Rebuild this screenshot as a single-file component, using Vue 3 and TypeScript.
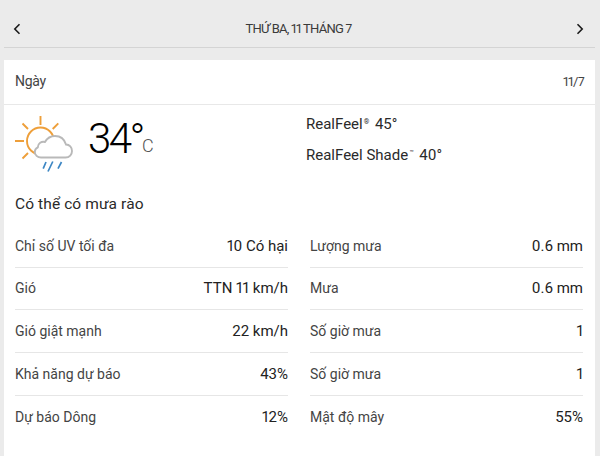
<script setup lang="ts">
interface Stat {
  label: string
  value: string
}

const stats: Stat[] = [
  { label: 'Chỉ số UV tối đa', value: '10 Có hại' },
  { label: 'Lượng mưa', value: '0.6 mm' },
  { label: 'Gió', value: 'TTN 11 km/h' },
  { label: 'Mưa', value: '0.6 mm' },
  { label: 'Gió giật mạnh', value: '22 km/h' },
  { label: 'Số giờ mưa', value: '1' },
  { label: 'Khả năng dự báo', value: '43%' },
  { label: 'Số giờ mưa', value: '1' },
  { label: 'Dự báo Dông', value: '12%' },
  { label: 'Mật độ mây', value: '55%' }
]
</script>

<template>
  <div class="page">
    <header class="nav">
      <svg class="chev" width="8" height="12" viewBox="0 0 8 12">
        <path d="M6.500 1.200 1.800 6l4.700 4.800" />
      </svg>
      <span class="nav-title">THỨ BA, 11 THÁNG 7</span>
      <svg class="chev" width="8" height="12" viewBox="0 0 8 12">
        <path d="M1.500 1.200 6.200 6l-4.700 4.800" />
      </svg>
    </header>

    <main class="card">
      <div class="card-head">
        <span class="day">Ngày</span>
        <span class="date">11/7</span>
      </div>

      <div class="current">
        <div class="now">
          <svg class="weather-icon" width="60" height="60" viewBox="14 115 60 60">
            <g class="sun">
              <circle cx="40.500" cy="141" r="13.500" />
              <path d="M15 141h9M40.500 116v9M22.500 123.500 28 129M58.300 123.300 52.700 129M22.500 158.500 28 153" />
            </g>
            <path
              class="cloud"
              d="M41 157.500H65.500C69.500 157.500 72 154.500 72 151C72 147.500 69.500 144.500 66 144.500C64.500 139.500 60.500 136 55 136C50.500 136 47 138.500 45 142C41.500 141 38 143.500 37.800 147.300C35.500 148.500 34.800 150.500 34.800 152C34.800 155 37.500 157.500 41 157.500Z"
            />
            <path class="rain" d="M46 162l-2.800 6.700M52.800 161.500l-4.800 10M61.500 162l-3.500 6.700" />
          </svg>
          <span class="temp">34°</span>
          <span class="unit">C</span>
        </div>
        <div class="feels">
          <div>RealFeel<sup>®</sup> 45°</div>
          <div>RealFeel Shade<sup>™</sup> 40°</div>
        </div>
      </div>

      <p class="phrase">Có thể có mưa rào</p>

      <div class="stats">
        <div v-for="(s, i) in stats" :key="i" class="stat">
          <span class="stat-label">{{ s.label }}</span>
          <span class="stat-value">{{ s.value }}</span>
        </div>
      </div>
    </main>
  </div>
</template>

<style>
html,
body {
  margin: 0;
  background: #ebebeb;
}
</style>

<style scoped>
.page {
  width: 600px;
  height: 456px;
  overflow: hidden;
  box-sizing: border-box;
  padding: 0 5px 0 4px;
  background: #ebebeb;
  font-family: Roboto, "Liberation Sans", sans-serif;
  font-variant-numeric: proportional-nums;
  color: #1f1f1f;
}

.nav {
  height: 48px;
  box-sizing: border-box;
  display: flex;
  align-items: center;
  justify-content: space-between;
  padding: 10px 11px 0 9px;
  border-bottom: 1px solid #d4d4d4;
}

.nav-title {
  font-size: 13px;
  letter-spacing: -0.75px;
  color: #3a3a3a;
}

.chev path {
  fill: none;
  stroke: #1a1a1a;
  stroke-width: 1.6;
}

.card {
  margin-top: 12px;
  height: 396px;
  background: #fff;
  padding: 0 12px 0 11px;
  box-sizing: border-box;
}

.card-head {
  height: 45px;
  margin: 0 -12px 0 -11px;
  padding: 0 11px 2px 11px;
  box-sizing: border-box;
  display: flex;
  align-items: center;
  justify-content: space-between;
  border-bottom: 1px solid #e8e8e8;
  font-size: 14px;
}

.day {
  color: #444;
  letter-spacing: -0.3px;
}

.date {
  font-size: 13px;
  letter-spacing: -0.6px;
  color: #444;
}

.current {
  display: grid;
  grid-template-columns: 273px 273px;
  column-gap: 22px;
  height: 72px;
}

.now {
  display: flex;
  align-items: flex-start;
}

.weather-icon {
  margin-top: 10px;
  margin-left: -1px;
}

.sun circle,
.sun path {
  fill: none;
  stroke: #ee9f3a;
  stroke-width: 1.9;
}

.cloud {
  fill: #fff;
  stroke: #b9b9b9;
  stroke-width: 1.9;
}

.rain {
  fill: none;
  stroke: #3d87c4;
  stroke-width: 1.7;
}

.temp {
  margin-left: 14px;
  margin-top: 6px;
  font-size: 42px;
  font-weight: 300;
  letter-spacing: -2.500px;
  line-height: 56px;
  color: #000;
}

.unit {
  margin-left: -1px;
  margin-top: 29px;
  font-size: 18px;
  font-weight: 300;
  line-height: 24px;
  color: #555;
}

.feels {
  margin-left: -4px;
  padding-top: 4px;
  font-size: 15px;
  line-height: 31px;
  color: #2a2a2a;
}

.feels sup {
  font-size: 7px;
  line-height: 0;
  vertical-align: 5px;
  margin: 0 2px 0 1px;
}

.phrase {
  margin: 0;
  height: 48px;
  padding-top: 16px;
  box-sizing: border-box;
  font-size: 15.5px;
  letter-spacing: 0.1px;
  line-height: 22px;
  color: #2a2a2a;
}

.stats {
  display: grid;
  grid-template-columns: 273px 273px;
  column-gap: 22px;
  grid-auto-rows: 42.67px;
}

.stat {
  display: flex;
  align-items: center;
  justify-content: space-between;
  box-sizing: border-box;
  border-bottom: 1px solid #e6e6e6;
}

.stat:nth-last-child(-n + 2) {
  border-bottom: 0;
}

.stat-label {
  font-size: 14px;
  color: #444;
}

.stat-value {
  font-size: 15px;
  color: #222;
}
</style>
